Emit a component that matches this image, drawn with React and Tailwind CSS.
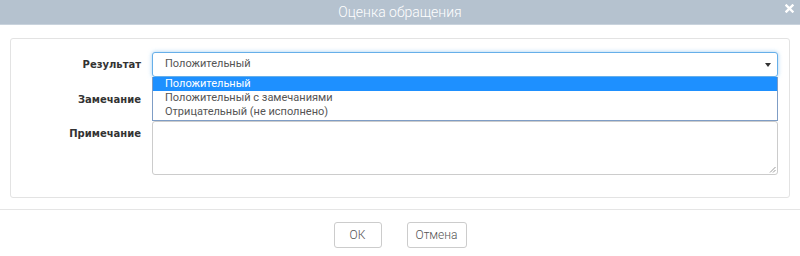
export default function App() {
  const sans = { fontFamily: 'Roboto, "Liberation Sans", sans-serif' };
  const lab = { fontFamily: '"DejaVu Sans", sans-serif' };
  return (
    <div className="w-[800px] h-[256px] bg-white overflow-hidden relative" style={sans}>
      <div className="h-[25px] bg-[#b5c2cf] border-b border-[#c9d3dd] flex items-center justify-center relative">
        <span className="text-white text-[14px] font-light leading-none">Оценка обращения</span>
        <svg className="absolute right-[6px] top-[4px]" width="9" height="9" viewBox="0 0 9 9">
          <path d="M1.5 1.5L7.5 7.5M7.5 1.5L1.5 7.5" stroke="#fff" strokeWidth="2.4" strokeLinecap="square" />
        </svg>
      </div>
      <div className="pt-[13px] px-[10px]">
        <div className="border border-[#e3e3e3] rounded-[3px] h-[160px] pt-[13px] pr-[11px]">
          <div className="grid grid-cols-[130px_1fr] gap-x-[11px] gap-y-[10px]">
            <label className="h-[25px] flex items-center justify-end text-[10px] font-bold text-[#333]" style={lab}>Результат</label>
            <div className="relative">
              <div className="h-[25px] border border-[#66afe9] rounded-[3px] shadow-[0_0_4px_rgba(102,175,233,0.6)] flex items-center pl-[12px] pr-[6px] text-[11px] text-[#555] bg-white">
                <span className="flex-1">Положительный</span>
                <svg width="6" height="4" viewBox="0 0 6 4"><path d="M0 0H6L3 4Z" fill="#333" /></svg>
              </div>
              <div className="absolute left-0 right-0 top-[25px] z-10 bg-white border border-t-0 border-[#7f9dc5] text-[11px] leading-[14px] text-[#555]">
                <div className="h-[14px] bg-[#1e90ff] text-white pl-[12px]">Положительный</div>
                <div className="h-[14px] pl-[12px]">Положительный с замечаниями</div>
                <div className="h-[15px] pl-[12px]">Отрицательный (не исполнено)</div>
              </div>
            </div>
            <label className="h-[24px] flex items-center justify-end text-[10px] font-bold text-[#333]" style={lab}>Замечание</label>
            <div className="h-[24px] border border-[#ccc] rounded-[3px]" />
            <label className="pt-[5px] flex justify-end text-[10px] font-bold text-[#333]" style={lab}>Примечание</label>
            <div className="h-[54px] border border-[#ccc] rounded-[3px] relative">
              <svg className="absolute right-[1px] bottom-[1px]" width="7" height="7" viewBox="0 0 7 7">
                <path d="M6.5 1L1 6.5M6.5 4L4 6.5" stroke="#999" strokeWidth="1" />
              </svg>
            </div>
          </div>
        </div>
      </div>
      <div className="mt-[11px] border-t border-[#e5e5e5] flex justify-center gap-[25px] pt-[12px]">
        <button className="w-[48px] h-[26px] border border-[#ccc] rounded-[3px] bg-white text-[12px] text-[#555] font-light">ОК</button>
        <button className="w-[60px] h-[26px] border border-[#ccc] rounded-[3px] bg-white text-[12px] text-[#555] font-light">Отмена</button>
      </div>
    </div>
  );
}
